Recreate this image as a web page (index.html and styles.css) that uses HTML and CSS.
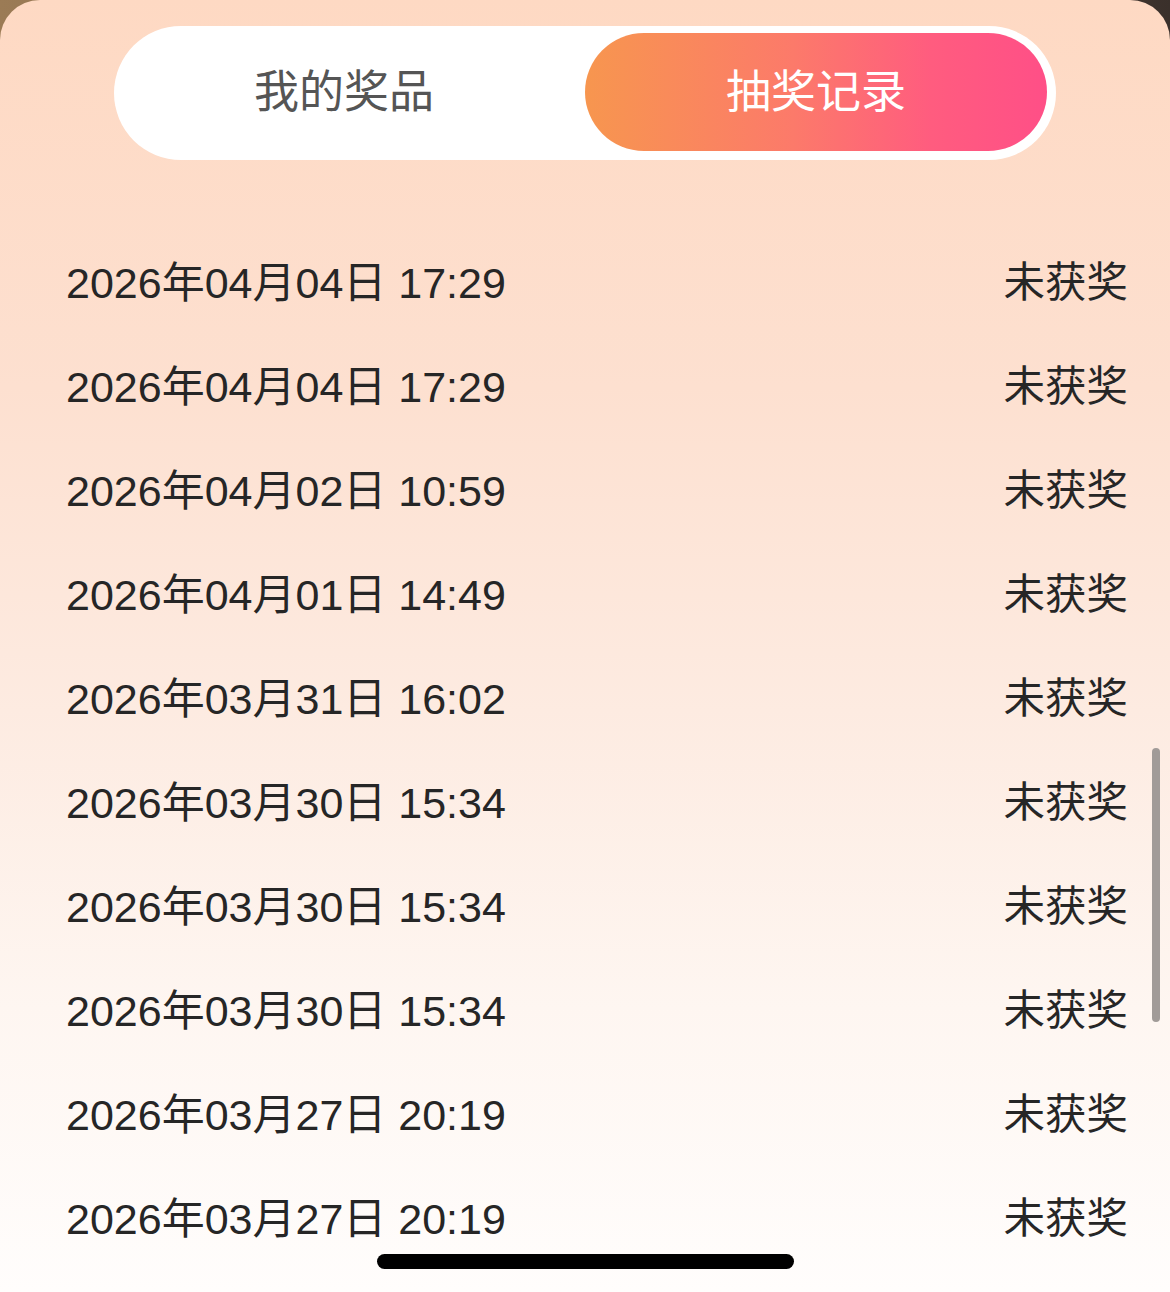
FILE: index.html
```html
<!DOCTYPE html>
<html lang="zh-CN">

<head>
    <meta charset="UTF-8">
    <meta name="viewport" content="width=device-width, initial-scale=1.0">
    <title>抽奖记录</title>
    <link rel="stylesheet" href="styles.css">
</head>

<body>
    <div class="sheet">
        <div class="tabs">
            <div class="tab">我的奖品</div>
            <div class="tab active">抽奖记录</div>
        </div>

        <ul class="records">
            <li class="record"><span class="time">2026年04月04日 17:29</span><span class="result">未获奖</span></li>
            <li class="record"><span class="time">2026年04月04日 17:29</span><span class="result">未获奖</span></li>
            <li class="record"><span class="time">2026年04月02日 10:59</span><span class="result">未获奖</span></li>
            <li class="record"><span class="time">2026年04月01日 14:49</span><span class="result">未获奖</span></li>
            <li class="record"><span class="time">2026年03月31日 16:02</span><span class="result">未获奖</span></li>
            <li class="record"><span class="time">2026年03月30日 15:34</span><span class="result">未获奖</span></li>
            <li class="record"><span class="time">2026年03月30日 15:34</span><span class="result">未获奖</span></li>
            <li class="record"><span class="time">2026年03月30日 15:34</span><span class="result">未获奖</span></li>
            <li class="record"><span class="time">2026年03月27日 20:19</span><span class="result">未获奖</span></li>
            <li class="record"><span class="time">2026年03月27日 20:19</span><span class="result">未获奖</span></li>
        </ul>

        <div class="scrollbar"></div>
        <div class="home-indicator"></div>
    </div>
</body>

</html>
```

FILE: styles.css
```css
* {
    margin: 0;
    padding: 0;
    box-sizing: border-box;
}

body,
html {
    height: 100%;
    overflow: hidden;
}

body {
    background: linear-gradient(90deg, #9b7b55 0%, #7a604a 50%, #3a302b 100%);
    font-family: "Liberation Sans", "Noto Sans CJK SC", sans-serif;
}

.sheet {
    position: relative;
    height: 1292px;
    border-radius: 40px 40px 0 0;
    background: linear-gradient(180deg, #fed9c3 0%, #fde0d0 30%, #fdebe1 55%, #fef6f1 78%, #fffdfc 100%);
    overflow: hidden;
}

/* Tabs */
.tabs {
    display: flex;
    margin: 26px 114px 0;
    height: 134px;
    padding: 7px 9px 9px;
    background: #fff;
    border-radius: 67px;
}

.tab {
    flex: none;
    width: 50%;
    display: flex;
    justify-content: center;
    align-items: center;
    font-size: 45px;
    color: #555;
    border-radius: 59px;
    padding: 0 20px 8px 0;
}

.tab.active {
    padding-right: 0;
    color: #fff;
    background: linear-gradient(90deg, #f7964f 0%, #fc7a6a 45%, #ff5c7f 75%, #ff4f87 100%);
}

/* Records */
.records {
    list-style: none;
    margin-top: 67px;
    padding: 0 42px 0 66px;
}

.record {
    display: flex;
    justify-content: space-between;
    align-items: center;
    height: 104px;
    font-size: 43px;
    color: #262626;
}

.record .result {
    font-size: 41.5px;
}

/* Scroll + home indicator */
.scrollbar {
    position: absolute;
    top: 748px;
    right: 10px;
    width: 8px;
    height: 274px;
    border-radius: 4px;
    background: #a19b98;
}

.home-indicator {
    position: absolute;
    left: 377px;
    top: 1254px;
    width: 417px;
    height: 15px;
    border-radius: 8px;
    background: #000;
}
```
